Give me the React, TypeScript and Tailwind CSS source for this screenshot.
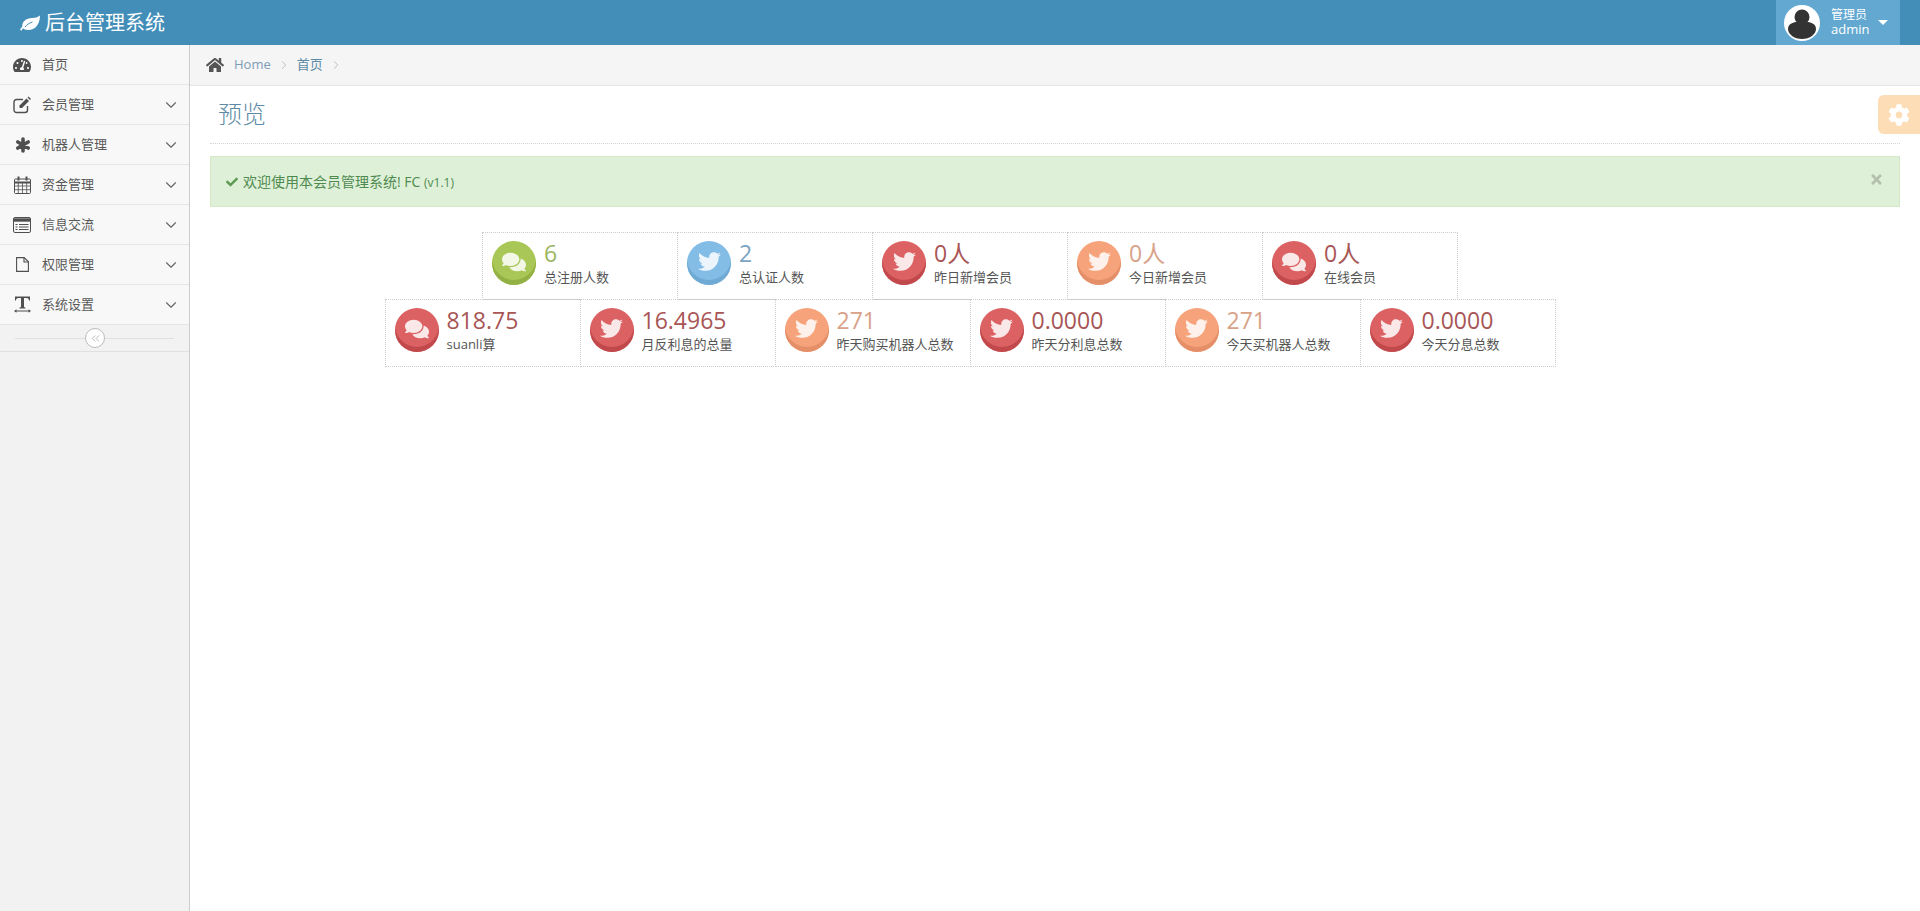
import type { ReactNode } from 'react';
import { ChevronDown, ChevronRight, ChevronsLeft } from 'lucide-react';
import {
    FaCheck,
    FaCog,
    FaComments,
    FaHome,
    FaTachometerAlt,
    FaTimes,
    FaTwitter,
} from 'react-icons/fa';

const FONT = "font-['Open_Sans','Noto_Sans_CJK_SC',sans-serif]";

// Font Awesome 4 shapes that the icon packages no longer carry
const LeafIcon = () => (
    <svg viewBox="0 0 20 16" className="w-[20px] h-[16px]">
        <path d="M20 0.5C20 9 15.5 15 8 15c-2.4 0-4-.6-5-1.7-.6.7-1.2 1.5-1.7 2.4L0 14.8c.7-1.2 1.5-2.4 2.3-3.3C1.9 6.5 6.5 3 12 3c3.2 0 6-.8 8-2.5z" fill="#fff" />
        <path d="M5 12c2-2.4 4.400-4 7.500-5" fill="none" stroke="#438eb9" strokeWidth="1" />
    </svg>
);

const EditIcon = () => (
    <svg viewBox="0 0 18 18" className="w-[18px] h-[18px]" fill="none" stroke="currentColor" strokeWidth="1.4">
        <path d="M14.5 10v4a2.5 2.5 0 0 1-2.5 2.5H3.5A2.5 2.5 0 0 1 1 14V6a2.5 2.5 0 0 1 2.5-2.5H10" />
        <path d="M6.5 9.5 13.5 2.5l2.5 2.5-7 7H6.5z" fill="currentColor" stroke="none" />
        <path d="M14.5 1.5l1-1 2.5 2.5-1 1z" fill="currentColor" stroke="none" />
    </svg>
);

const AsteriskIcon = () => (
    <svg viewBox="0 0 16 16" className="w-[16px] h-[16px]" fill="none" stroke="currentColor" strokeWidth="3.6" strokeLinecap="round">
        <path d="M8 2v12M2.8 5l10.4 6M2.8 11l10.4-6" />
    </svg>
);

const CalendarIcon = () => (
    <svg viewBox="0 0 17 18" className="w-[17px] h-[18px]" fill="none" stroke="currentColor" strokeWidth="1">
        <rect x="0.5" y="3" width="16" height="14.5" rx="1" />
        <path d="M0.5 6.5h16" strokeWidth="2" />
        <path d="M0.5 10h16M0.5 13.7h16M4.3 7v10.5M8.5 7v10.5M12.7 7v10.5" strokeWidth="0.8" />
        <path d="M4.5 0.5v4M12.5 0.5v4" strokeWidth="2" />
    </svg>
);

const ListIcon = () => (
    <svg viewBox="0 0 18 16" className="w-[18px] h-[16px]" fill="none" stroke="currentColor">
        <rect x="0.5" y="0.5" width="17" height="15" rx="1.5" strokeWidth="1" />
        <path d="M0.5 3h17" strokeWidth="3.4" />
        <path d="M2.5 7.5h2M2.5 10h2M2.5 12.5h2M6 7.5h9.5M6 10h9.5M6 12.5h9.5" strokeWidth="1.2" />
    </svg>
);

const FileIcon = () => (
    <svg viewBox="0 0 13 15" className="w-[13px] h-[15px]" fill="none" stroke="currentColor" strokeWidth="1.1">
        <path d="M0.6 0.6h7.6l4.2 4.2v9.6H0.6z" />
        <path d="M8 0.6v4.4h4.4" />
    </svg>
);

const TextWidthIcon = () => (
    <svg viewBox="0 0 17 17" className="w-[17px] h-[17px]" fill="currentColor">
        <path d="M1 0.5h15v4h-0.9c-0.2-1.5-0.8-2.6-2.6-2.6H10v8.6c0 .8.5 1.1 1.6 1.2v.8H5.4v-.8c1.1-.1 1.6-.4 1.6-1.2V1.9H4.5c-1.8 0-2.4 1.1-2.6 2.6H1z" />
        <path d="M0 15l2.5-1.8v1.2h12v-1.2L17 15l-2.5 1.8v-1.2h-12v1.2z" />
    </svg>
);

const MENU: { label: string; icon: ReactNode; arrow?: boolean }[] = [
    { label: '首页', icon: <FaTachometerAlt className="w-[18px] h-[18px]" /> },
    { label: '会员管理', icon: <EditIcon />, arrow: true },
    { label: '机器人管理', icon: <span className="pl-[2px] flex"><AsteriskIcon /></span>, arrow: true },
    { label: '资金管理', icon: <span className="pl-[1px] flex"><CalendarIcon /></span>, arrow: true },
    { label: '信息交流', icon: <ListIcon />, arrow: true },
    { label: '权限管理', icon: <span className="pl-[3px] flex"><FileIcon /></span>, arrow: true },
    { label: '系统设置', icon: <span className="pl-[1px] flex"><TextWidthIcon /></span>, arrow: true },
];

type Tone = 'green' | 'blue' | 'red' | 'orange';

const TONES: Record<Tone, { circle: string; number: string }> = {
    green: { circle: 'bg-[#a9c756] shadow-[inset_0_-5px_0_#93b044]', number: 'text-[#9ab563]' },
    blue: { circle: 'bg-[#83bde6] shadow-[inset_0_-5px_0_#6faad4]', number: 'text-[#7ba4c4]' },
    red: { circle: 'bg-[#dc6163] shadow-[inset_0_-5px_0_#c1494c]', number: 'text-[#a85555]' },
    orange: { circle: 'bg-[#f6a37b] shadow-[inset_0_-5px_0_#e48f68]', number: 'text-[#d9a288]' },
};

type Stat = { value: string; label: string; tone: Tone; chat?: boolean };

const ROW_ONE: Stat[] = [
    { value: '6', label: '总注册人数', tone: 'green', chat: true },
    { value: '2', label: '总认证人数', tone: 'blue' },
    { value: '0人', label: '昨日新增会员', tone: 'red' },
    { value: '0人', label: '今日新增会员', tone: 'orange' },
    { value: '0人', label: '在线会员', tone: 'red', chat: true },
];

const ROW_TWO: Stat[] = [
    { value: '818.75', label: 'suanli算', tone: 'red', chat: true },
    { value: '16.4965', label: '月反利息的总量', tone: 'red' },
    { value: '271', label: '昨天购买机器人总数', tone: 'orange' },
    { value: '0.0000', label: '昨天分利息总数', tone: 'red' },
    { value: '271', label: '今天买机器人总数', tone: 'orange' },
    { value: '0.0000', label: '今天分息总数', tone: 'red' },
];

function StatCell({ stat }: { stat: Stat }) {
    const tone = TONES[stat.tone];
    return (
        <div className="w-[196px] h-[68px] -mb-px -mr-px shrink-0 flex items-start pl-[9px] pt-[8px] border border-dotted border-[#ccc]">
            <div className={`w-[44px] h-[44px] rounded-full shrink-0 flex items-center justify-center text-white/85 pb-[3px] ${tone.circle}`}>
                {stat.chat ? <FaComments className="w-[24px] h-[24px]" /> : <FaTwitter className="w-[23px] h-[23px]" />}
            </div>
            <div className="ml-[8px] -mt-[1px] flex flex-col">
                <span className={`text-[23px] leading-[26px] ${tone.number}`}>{stat.value}</span>
                <span className="text-[13px] leading-[20px] mt-[1px] text-[#555] whitespace-nowrap">{stat.label}</span>
            </div>
        </div>
    );
}

export default function App() {
    return (
        <div className={`min-h-[911px] bg-white ${FONT}`}>
            {/* Top bar */}
            <header className="h-[45px] bg-[#438eb9] flex items-center justify-between pl-[20px] pr-[20px]">
                <div className="flex items-center text-white">
                    <LeafIcon />
                    <span className="ml-[5px] text-[20px] leading-none">后台管理系统</span>
                </div>
                <div className="w-[124px] h-[45px] bg-[#62a8d1] flex items-center pl-[8px] text-white">
                    <svg viewBox="0 0 36 36" className="w-[36px] h-[36px] shrink-0">
                        <circle cx="18" cy="18" r="18" fill="#fff" />
                        <circle cx="18" cy="12" r="7.5" fill="#333" />
                        <path d="M4 24c0-5 5-7 9-7h10c4 0 9 2 9 7 0 5-6 10-14 10S4 29 4 24z" fill="#333" />
                    </svg>
                    <div className="ml-[11px] -mt-[2px] flex flex-col text-[13px] leading-[15px]">
                        <span className="text-[12px]">管理员</span>
                        <span>admin</span>
                    </div>
                    <span className="ml-[9px] w-0 h-0 border-x-[5px] border-x-transparent border-t-[5px] border-t-white" />
                </div>
            </header>

            <div className="flex">
                {/* Sidebar */}
                <aside className="w-[190px] min-h-[866px] shrink-0 bg-[#f2f2f2] border-r border-[#ccc]">
                    {MENU.map((item) => (
                        <div key={item.label} className="h-[40px] bg-[#f8f8f8] border-b border-[#e5e5e5] flex items-center text-[#585858]">
                            <span className="w-[42px] pl-[13px] shrink-0 flex items-center justify-start text-[#4f4f4f]">{item.icon}</span>
                            <span className="text-[13px] leading-none">{item.label}</span>
                            {item.arrow && <ChevronDown strokeWidth={1.5} className="w-[18px] h-[18px] ml-auto mr-[9px] text-[#666]" />}
                        </div>
                    ))}
                    <div className="h-[27px] border-b border-[#e0e0e0] flex items-center justify-center relative">
                        <div className="w-[159px] h-px bg-[#e0e0e0]" />
                        <span className="absolute left-[85px] top-[3px] w-[20px] h-[20px] rounded-full bg-white border border-[#bbb] flex items-center justify-center text-[#aaa]">
                            <ChevronsLeft strokeWidth={1.5} className="w-[13px] h-[13px]" />
                        </span>
                    </div>
                </aside>

                {/* Main */}
                <main className="flex-1 min-w-0 relative">
                    <div className="h-[41px] bg-[#f5f5f5] border-b border-[#e5e5e5] flex items-center pl-[16px] text-[13px]">
                        <FaHome className="w-[18px] h-[18px] text-[#555]" />
                        <a className="ml-[10px] text-[#7d9cb5]">Home</a>
                        <ChevronRight strokeWidth={1.5} className="mx-[6px] w-[14px] h-[14px] text-[#b2b6bf]" />
                        <a className="text-[#5a8aa5]">首页</a>
                        <ChevronRight strokeWidth={1.5} className="mx-[6px] w-[14px] h-[14px] text-[#b2b6bf]" />
                    </div>

                    <div className="px-[20px]">
                        <div className="h-[58px] border-b border-dotted border-[#d5d5d5] flex items-center pl-[8px] pb-[2px]">
                            <h1 className="text-[24px] leading-none font-light text-[#5d8ba5]">预览</h1>
                        </div>

                        <div className="mt-[12px] h-[51px] bg-[#dff0d8] border border-[#d6e9c6] flex items-center pl-[15px] pr-[15px] text-[14px] text-[#4e8a4f]">
                            <FaCheck className="w-[12px] h-[12px] text-[#5b9a50]" />
                            <span className="ml-[5px] -mt-[1px]">欢迎使用本会员管理系统! FC <small className="text-[12px]">(v1.1)</small></span>
                            <FaTimes className="ml-auto mb-[5px] w-[15px] h-[15px] text-black/20" />
                        </div>

                        <div className="mt-[25px] mr-[171px] flex flex-col items-center">
                            <div className="flex">
                                {ROW_ONE.map((s) => <StatCell key={s.label} stat={s} />)}
                            </div>
                            <div className="flex">
                                {ROW_TWO.map((s) => <StatCell key={s.label} stat={s} />)}
                            </div>
                        </div>
                    </div>

                    {/* Settings tab */}
                    <div className="absolute top-[50px] right-0 w-[42px] h-[39px] rounded-l-[6px] bg-[#fdddb5] flex items-center justify-center text-white">
                        <FaCog className="w-[22px] h-[22px]" />
                    </div>
                </main>
            </div>
        </div>
    );
}
